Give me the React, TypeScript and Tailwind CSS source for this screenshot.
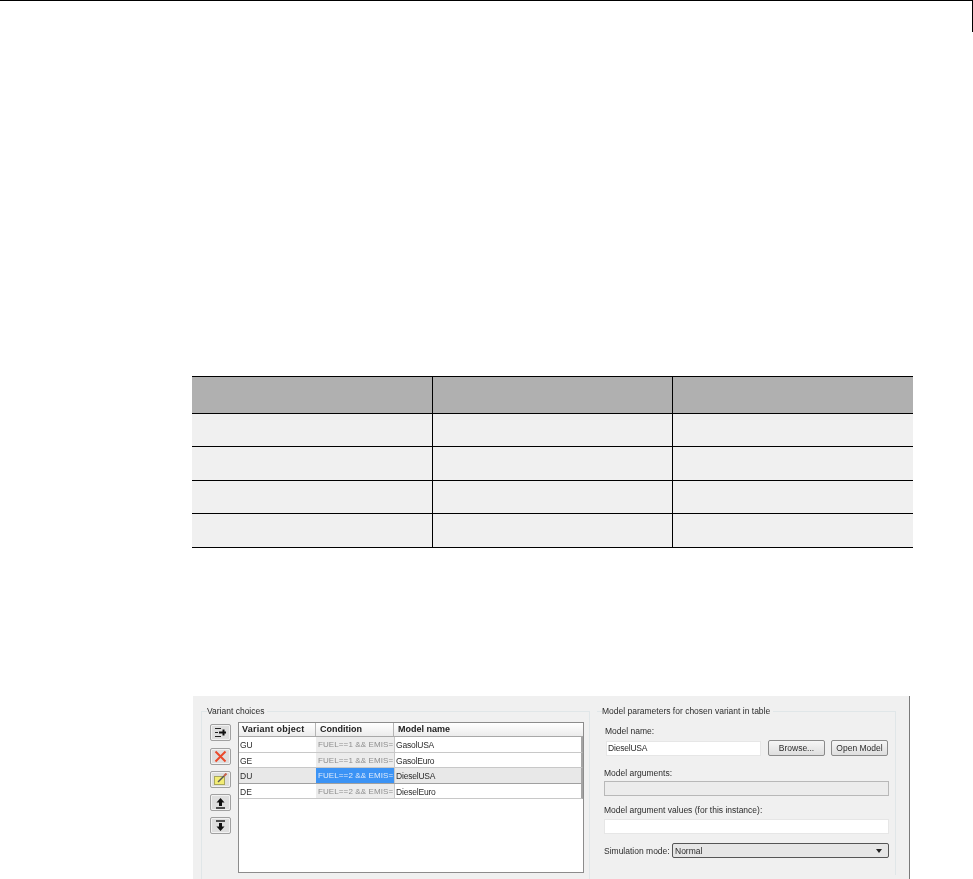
const UI_FONT = "font-['Liberation_Sans',Arial,sans-serif] text-[8.5px] leading-[12px] text-[#2c2c2c] blur-[0.3px]";

const DOC_ROWS = [
  { height: "h-[37px]", bg: "bg-[#b0b0b0]" },
  { height: "h-[33px]", bg: "bg-[#f0f0f0]" },
  { height: "h-[34px]", bg: "bg-[#f0f0f0]" },
  { height: "h-[33px]", bg: "bg-[#f0f0f0]" },
  { height: "h-[34px]", bg: "bg-[#f0f0f0]" },
];

const VARIANTS = [
  { name: "GU", condition: "FUEL==1 && EMIS=", model: "GasolUSA", height: "h-[16px]", selected: false },
  { name: "GE", condition: "FUEL==1 && EMIS=", model: "GasolEuro", height: "h-[15px]", selected: false },
  { name: "DU", condition: "FUEL==2 && EMIS=", model: "DieselUSA", height: "h-[16px]", selected: true },
  { name: "DE", condition: "FUEL==2 && EMIS=", model: "DieselEuro", height: "h-[15px]", selected: false },
];

function DocTable() {
  return (
    <div className="ml-[192px] mt-[344px] w-[721px] border-t border-black">
      {DOC_ROWS.map((row, i) => (
        <div key={i} className={`grid grid-cols-[241px_240px_240px] border-b border-black ${row.height} ${row.bg}`}>
          <div className="border-r border-black" />
          <div className="border-r border-black" />
          <div />
        </div>
      ))}
    </div>
  );
}

function ToolButton({ children, mt }: { children: React.ReactNode; mt: string }) {
  return (
    <div className={`flex h-[17px] w-[21px] items-center justify-center rounded-[2px] border border-[#a0a0a0] bg-[#dedede] shadow-[inset_0_0_0_1px_#f2f2f2] ${mt}`}>
      {children}
    </div>
  );
}

function ToolButtons() {
  return (
    <div className="flex w-[21px] flex-col">
      <ToolButton mt="mt-[2px]">
        <svg width="13" height="11" viewBox="0 0 13 11">
          <path d="M1 1.5h6M1 5.5h3M1 9.5h6" stroke="#222" strokeWidth="1.2" />
          <path d="M5 5.5h7M9.5 2.5v6" stroke="#111" strokeWidth="2" fill="none" />
        </svg>
      </ToolButton>
      <ToolButton mt="mt-[7px]">
        <svg width="13" height="13" viewBox="0 0 13 13">
          <path d="M1.5 1.5l10 10M11.5 1.5l-10 10" stroke="#ea4a2c" strokeWidth="2" />
        </svg>
      </ToolButton>
      <ToolButton mt="mt-[6px]">
        <svg width="15" height="13" viewBox="0 0 15 13">
          <rect x="1.5" y="3.5" width="10" height="8" fill="#f2ec74" stroke="#a8a65c" />
          <path d="M5 9 11 3" stroke="#555" strokeWidth="1.5" />
          <path d="M11 3l2.5-2.5" stroke="#c8604a" strokeWidth="2" />
        </svg>
      </ToolButton>
      <ToolButton mt="mt-[6px]">
        <svg width="11" height="12" viewBox="0 0 11 12">
          <path d="M5.5 1 1.5 5.5h2.5V9h3V5.5h2.5z" fill="#111" />
          <path d="M1 11h9" stroke="#111" strokeWidth="1.4" />
        </svg>
      </ToolButton>
      <ToolButton mt="mt-[6px]">
        <svg width="11" height="12" viewBox="0 0 11 12">
          <path d="M1 1h9" stroke="#111" strokeWidth="1.4" />
          <path d="M5.5 11 1.5 6.5h2.5V3h3v3.5h2.5z" fill="#111" />
        </svg>
      </ToolButton>
    </div>
  );
}

function VariantTable() {
  return (
    <div className="flex h-[151px] w-[346px] flex-col border border-[#8c8c8c] bg-white">
      <div className="grid h-[14px] shrink-0 grid-cols-[77px_78px_1fr] border-b border-[#a8a8a8] bg-gradient-to-b from-white to-[#ececec] text-[9px] font-bold text-[#222]">
        <div className="truncate border-r border-[#b4b4b4] pl-[3px] tracking-[0.25px]">Variant object</div>
        <div className="truncate border-r border-[#b4b4b4] pl-[4px]">Condition</div>
        <div className="truncate pl-[4px]">Model name</div>
      </div>
      {VARIANTS.map((v) => (
        <div
          key={v.name}
          className={`grid shrink-0 grid-cols-[77px_78px_1fr] items-center border-b border-r-2 border-r-[#a4a4a4] text-[8.5px] ${v.height} ${v.selected ? "border-b-[#a0a0a0] bg-[#e8e8e8]" : "border-b-[#c8c8c8] bg-white"}`}
        >
          <div className="flex h-full items-center pl-[1px] pt-[1px]">{v.name}</div>
          <div
            className={`flex h-full items-center whitespace-nowrap pl-[2px] pt-[1px] text-[8px] tracking-[0.1px] ${v.selected ? "bg-[#3b93f5] text-[#dfeafa]" : "bg-[#ececec] text-[#8e8e8e]"}`}
          >
            {v.condition}
          </div>
          <div className="flex h-full items-center border-l border-[#c8c8c8] pl-[1px] pt-[1px] tracking-[-0.2px]">{v.model}</div>
        </div>
      ))}
    </div>
  );
}

function TextBox({ disabled = false, value = "", width = "w-[285px]" }: { disabled?: boolean; value?: string; width?: string }) {
  return (
    <div
      className={`flex h-[15px] items-center pl-[1px] tracking-[-0.2px] ${width} ${disabled ? "border border-[#b8b8b8] bg-[#ececec]" : "border border-[#e6e6e6] bg-white"}`}
    >
      {value}
    </div>
  );
}

function PushButton({ label }: { label: string }) {
  return (
    <div className="flex h-[16px] w-[57px] items-center justify-center rounded-[2px] border border-[#8a8a8a] bg-gradient-to-b from-[#f6f6f6] to-[#dedede]">
      {label}
    </div>
  );
}

function ModelParams() {
  return (
    <fieldset className="ml-[7px] mt-[9px] h-[170px] w-[299px] border-t border-r border-[#e0e6e8] pl-[7px]">
      <legend className="ml-[-2px] pr-[3px]">Model parameters for chosen variant in table</legend>
      <div className="ml-[1px] mt-[8px]">Model name:</div>
      <div className="mt-[3px] flex items-center">
        <div className="ml-[2px]">
          <TextBox value="DieselUSA" width="w-[155px]" />
        </div>
        <div className="ml-[7px] flex gap-[6px]">
          <PushButton label="Browse..." />
          <PushButton label="Open Model" />
        </div>
      </div>
      <div className="mt-[11px]">Model arguments:</div>
      <div className="mt-[2px]">
        <TextBox disabled />
      </div>
      <div className="mt-[8px]">Model argument values (for this instance):</div>
      <div className="mt-[3px]">
        <TextBox />
      </div>
      <div className="mt-[9px] flex items-center">
        <div className="w-[68px] whitespace-nowrap">Simulation mode:</div>
        <div className="flex h-[15px] w-[217px] items-center justify-between rounded-[2px] border border-[#555] bg-[#e6e6e6] pl-[2px] pr-[6px]">
          <span>Normal</span>
          <svg width="6" height="4" viewBox="0 0 6 4">
            <path d="M0 0h6L3 4z" fill="#222" />
          </svg>
        </div>
      </div>
    </fieldset>
  );
}

function VariantPanel() {
  return (
    <div className={`ml-[193px] mt-[148px] flex h-[183px] w-[717px] overflow-hidden border-r border-[#7a7a7a] bg-[#f0f0f0] ${UI_FONT}`}>
      <fieldset className="ml-[8px] mt-[9px] h-[178px] w-[389px] border-t border-l border-r border-[#e0e6e8] pl-[8px]">
        <legend className="ml-[-3px] pr-[3px]">Variant choices</legend>
        <div className="mt-[5px] flex gap-[7px]">
          <ToolButtons />
          <VariantTable />
        </div>
      </fieldset>
      <ModelParams />
    </div>
  );
}

export default function App() {
  return (
    <div className="flex h-[879px] w-[973px] flex-col overflow-hidden bg-white">
      <div className="h-px w-full shrink-0 bg-black" />
      <div className="h-[31px] w-px shrink-0 self-end bg-black" />
      <DocTable />
      <VariantPanel />
    </div>
  );
}
